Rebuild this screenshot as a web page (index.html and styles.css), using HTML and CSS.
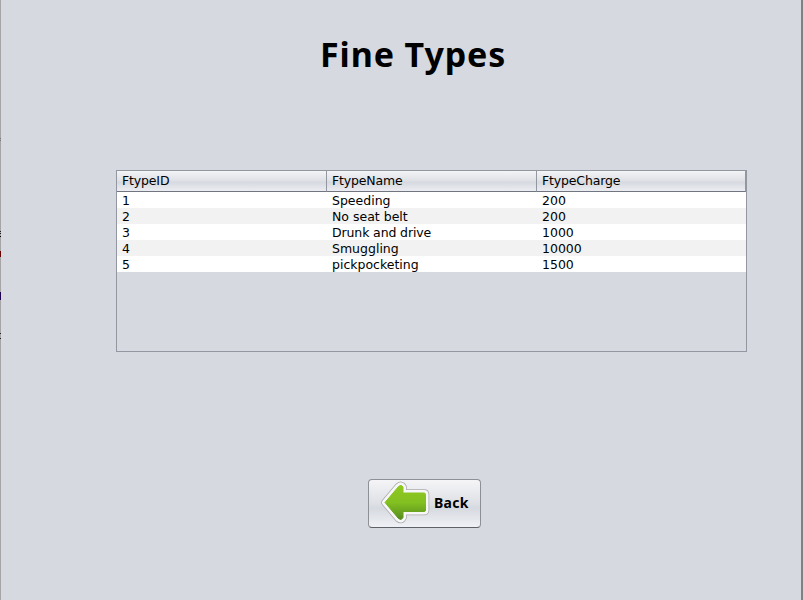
FILE: index.html
```html
<!DOCTYPE html>
<html lang="en">
<head>
<meta charset="utf-8">
<title>Fine Types</title>
<link rel="stylesheet" href="styles.css">
</head>
<body>
<main class="window">
  <h1 class="title">Fine Types</h1>
  <div class="table-pane">
    <table class="fines">
      <thead>
        <tr><th>FtypeID</th><th>FtypeName</th><th>FtypeCharge</th></tr>
      </thead>
      <tbody>
        <tr><td>1</td><td>Speeding</td><td>200</td></tr>
        <tr><td>2</td><td>No seat belt</td><td>200</td></tr>
        <tr><td>3</td><td>Drunk and drive</td><td>1000</td></tr>
        <tr><td>4</td><td>Smuggling</td><td>10000</td></tr>
        <tr><td>5</td><td>pickpocketing</td><td>1500</td></tr>
      </tbody>
    </table>
  </div>
  <button class="back" type="button">
    <svg class="arrow" width="50" height="44" viewBox="0 0 50 44" aria-hidden="true">
      <defs>
        <linearGradient id="green" x1="0" y1="0" x2="0" y2="1">
          <stop offset="0" stop-color="#8fc81f"/>
          <stop offset="0.5" stop-color="#83c021"/>
          <stop offset="1" stop-color="#568b1f"/>
        </linearGradient>
        <path id="shape" d="M5 21.500 18.500 5.500Q21.500 3 23 6V12H44Q45.500 12 45.500 13.500V29Q45.500 30.500 44 30.500H23V36.500Q21.500 40 18.500 37.500Z"/>
      </defs>
      <g stroke-linejoin="round">
        <use href="#shape" fill="#aaa" stroke="#aaa" stroke-width="7.500"/>
        <use href="#shape" fill="#f7f7f8" stroke="#f7f7f8" stroke-width="6"/>
        <use href="#shape" fill="url(#green)" stroke="url(#green)" stroke-width="1"/>
      </g>
    </svg>
    <span class="label">Back</span>
  </button>
</main>
</body>
</html>
```
FILE: styles.css
```css
* { box-sizing: border-box; }

body { margin: 0; background: #d6d9e0; }

.window {
  height: 600px;
  padding: 29px 54px 0 116px;
  border-right: 2px solid #808080;
  /* sliver of the window behind, along the left edge */
  background:
    linear-gradient(#777, #777) 0 138px / 1px 1px no-repeat,
    linear-gradient(#777, #777) 0 140px / 1px 1px no-repeat,
    linear-gradient(#222, #222) 0 231px / 1px 1px no-repeat,
    linear-gradient(#222, #222) 0 233px / 1px 1px no-repeat,
    linear-gradient(#000, #000) 0 236px / 1px 1px no-repeat,
    linear-gradient(#6b0000, #6b0000) 0 251px / 1px 6px no-repeat,
    linear-gradient(#200050, #200050) 0 292px / 1px 8px no-repeat,
    linear-gradient(#222, #222) 0 333px / 1px 1px no-repeat,
    linear-gradient(#222, #222) 0 338px / 1px 1px no-repeat,
    linear-gradient(#a5a5a5, #a5a5a5) 0 0 / 1px 100% no-repeat;
  display: flex;
  flex-direction: column;
  overflow: hidden;
  color: #000;
}

.title {
  margin: 0 0 0 204px;
  height: 50px;
  font: bold 34px/50px "Noto Sans", sans-serif;
  letter-spacing: 0.9px;
  white-space: nowrap;
}

.table-pane {
  width: 631px;
  height: 182px;
  margin-top: 91px;
  border: 1px solid #9297a1;
  font: 12.5px/16px "DejaVu Sans", sans-serif;
}

.fines {
  width: 629px;
  table-layout: fixed;
  border-collapse: separate;
  border-spacing: 0;
}

.fines th {
  height: 21px;
  padding: 0 5px 1px;
  text-align: left;
  font-weight: normal;
  line-height: 19px;
  letter-spacing: -0.15px;
  background: linear-gradient(#f3f4f6, #dfe1e6 48%, #d6d9df 55%, #ebedf2);
  border-right: 1px solid #9297a1;
  border-bottom: 1px solid #71757f;
}

.fines th:nth-child(-n+2) { width: 210px; }

.fines td {
  height: 16px;
  padding: 1px 5px 0;
  line-height: 15px;
  background: #fff;
}

.fines tr:nth-child(3) td:nth-child(2) { letter-spacing: -0.12px; }

.fines tr:nth-child(even) td { background: #f2f2f2; }

.back {
  width: 113px;
  height: 49px;
  margin: 127px 0 0 252px;
  padding: 0 0 1px 11px;
  display: flex;
  align-items: center;
  gap: 4px;
  border: 1px solid #8d9096;
  border-bottom-color: #5d6066;
  border-radius: 4px;
  background: linear-gradient(#f5f5f7, #dfe1e6 48%, #d6d9df 60%, #eff1f6);
  color: #000;
  font: bold 14px/20px "Noto Sans", sans-serif;
  letter-spacing: 0.3px;
}

.arrow { flex: none; }

.label { padding-bottom: 1px; }
```
